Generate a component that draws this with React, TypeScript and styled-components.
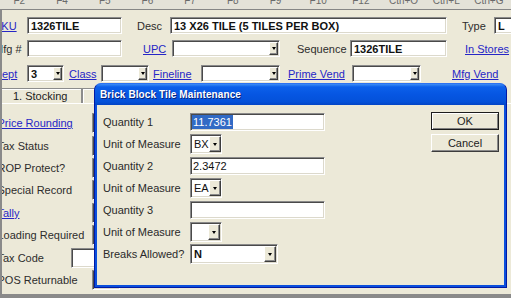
import styled, { createGlobalStyle, css } from "styled-components";

const GlobalStyle = createGlobalStyle`
  html, body {
    margin: 0;
    padding: 0;
    background: #ece9d8;
  }
  body {
    width: 511px;
    height: 298px;
    overflow: hidden;
  }
`;

const sunken = css`
  box-sizing: border-box;
  background: #fff;
  border-top: 1px solid #8a8a8a;
  border-left: 1px solid #8a8a8a;
  border-right: 1px solid #fff;
  border-bottom: 1px solid #fff;
  box-shadow: inset 1px 1px 0 #4a4a4a, inset -1px -1px 0 #dcd9cc;
`;

const raised = css`
  box-sizing: border-box;
  background: #ece9d8;
  border-top: 1px solid #fff;
  border-left: 1px solid #fff;
  border-right: 1px solid #3c3c3c;
  border-bottom: 1px solid #3c3c3c;
  box-shadow: inset -1px -1px 0 #8a8a8a;
`;

const Screen = styled.div`
  position: relative;
  width: 511px;
  height: 298px;
  overflow: hidden;
  background: #ece9d8;
  font-family: "Liberation Sans", Arial, sans-serif;
  font-size: 11px;
  color: #1e1e1e;
`;

const KeyBar = styled.div`
  display: flex;
  height: 9px;
  overflow: hidden;
  margin-left: -2px;
  background: #e4e2d8;
`;

const Key = styled.div`
  flex: none;
  width: 42.7px;
  margin-top: -5px;
  line-height: 12px;
  font-size: 10px;
  text-align: center;
  color: #6a6a6a;
`;

const Window = styled.div`
  box-sizing: border-box;
  height: 289px;
  overflow: hidden;
  border-top: 1px solid #868686;
  border-left: 2px solid #8a8a8a;
  border-bottom: 4px solid #8a8a8a;
`;

const Content = styled.div`
  margin-left: -8px;
`;

const Row = styled.div<{ $top: number }>`
  display: flex;
  align-items: center;
  height: 17px;
  margin-top: ${(p) => p.$top}px;
  white-space: nowrap;
`;

const Label = styled.span<{ $w?: number; $ml?: number; $link?: boolean }>`
  flex: none;
  width: ${(p) => (p.$w ? `${p.$w}px` : "auto")};
  margin-left: ${(p) => p.$ml ?? 0}px;
  color: #2c2c2c;
  ${(p) =>
    p.$link &&
    css`
      color: #2626c6;
      text-decoration: underline;
    `}
`;

const Field = styled.div<{ $w: number }>`
  ${sunken};
  flex: none;
  width: ${(p) => p.$w}px;
  height: 100%;
  padding-left: 3px;
  display: flex;
  align-items: center;
  font-weight: bold;
  color: #111;
  overflow: hidden;
`;

const Combo = styled.div<{ $w: number; $h?: number }>`
  ${sunken};
  flex: none;
  display: flex;
  width: ${(p) => p.$w}px;
  height: ${(p) => (p.$h ? `${p.$h}px` : "100%")};
  padding: 1px;
`;

const ComboText = styled.span<{ $bold?: boolean }>`
  flex: 1;
  display: flex;
  align-items: center;
  padding-left: 2px;
  font-weight: ${(p) => (p.$bold ? "bold" : "normal")};
  color: #111;
`;

const Drop = styled.span<{ $w: number }>`
  ${raised};
  flex: none;
  width: ${(p) => p.$w}px;
  display: flex;
  align-items: center;
  justify-content: center;

  &::after {
    content: "";
    border-left: 2.5px solid transparent;
    border-right: 2.5px solid transparent;
    border-top: 3px solid #000;
  }
`;

const TabStrip = styled.div`
  display: flex;
  height: 15px;
  margin-top: 6px;
  margin-left: 6px;
  border-bottom: 1px solid #fff;
`;

const Tab = styled.div<{ $w: number }>`
  box-sizing: border-box;
  width: ${(p) => p.$w}px;
  border: 1px solid #8c8c8c;
  border-bottom: none;
  box-shadow: inset 1px 1px 0 #fff;
  padding-left: 12px;
  line-height: 14px;
  color: #222;
`;

const Panel = styled.div`
  margin-top: 8px;
`;

const PanelRow = styled.div`
  display: flex;
  align-items: center;
  height: 22.4px;
  padding-left: 3.5px;
  white-space: nowrap;
`;

const PanelField = styled.div<{ $w: number }>`
  ${sunken};
  flex: none;
  width: ${(p) => p.$w}px;
  height: 20px;
`;

const Dialog = styled.div`
  position: absolute;
  left: 94px;
  top: 83px;
  width: 413px;
  height: 205px;
  box-sizing: border-box;
  display: flex;
  flex-direction: column;
  border: 1px solid #0019a5;
  border-top-color: #2c72f2;
  border-radius: 7px 7px 0 0;
  padding: 0 2px 2px;
  background: #0b4fdc;
`;

const TitleBar = styled.div`
  flex: none;
  height: 21px;
  margin: 0 -2px;
  padding-left: 5px;
  display: flex;
  align-items: center;
  border-radius: 6px 6px 0 0;
  background: linear-gradient(
    to bottom,
    #3d8df6 0%,
    #0c60ea 14%,
    #0656e2 50%,
    #0451d9 85%,
    #0344c4 100%
  );
  color: #fff;
  font-weight: bold;
  font-size: 10px;
  letter-spacing: 0.1px;
  text-shadow: 1px 1px 0 #0a2478;
`;

const Body = styled.div`
  flex: 1;
  display: flex;
  padding: 6px 5px 0 6px;
  background: #ece9d8;
`;

const FormGrid = styled.div`
  display: grid;
  grid-template-columns: 87px auto;
  grid-auto-rows: 22px;
  align-items: center;
  justify-items: start;
  white-space: nowrap;
`;

const DlgLabel = styled.span`
  color: #2a2a2a;
`;

const DlgInput = styled.div<{ $w: number }>`
  ${sunken};
  width: ${(p) => p.$w}px;
  height: 18px;
  padding-left: 2px;
  display: flex;
  align-items: center;
  color: #111;
`;

const Selected = styled.span`
  background: #316ac5;
  color: #fff;
  line-height: 14px;
  padding: 0 1px;
  margin-left: -1px;
`;

const ButtonColumn = styled.div`
  margin-left: auto;
  padding-top: 1px;
  display: flex;
  flex-direction: column;
  gap: 4px;
`;

const Button = styled.div<{ $default?: boolean }>`
  ${raised};
  width: 68px;
  height: 18px;
  display: flex;
  align-items: center;
  justify-content: center;
  color: #222;
  ${(p) =>
    p.$default &&
    css`
      border: 1px solid #1c1c1c;
      box-shadow: inset 1px 1px 0 #fff, inset -1px -1px 0 #808080;
    `}
`;

const keys = ["F2", "F4", "F5", "F6", "F7", "F8", "F9", "F10", "F12", "Ctrl+O", "Ctrl+L", "Ctrl+G"];

const panelRows: { label: string; link?: boolean; w: number; field: number }[] = [
  { label: "Price Rounding", link: true, w: 94.5, field: 60 },
  { label: "Tax Status", w: 94.5, field: 60 },
  { label: "ROP Protect?", w: 94.5, field: 60 },
  { label: "Special Record", w: 94.5, field: 60 },
  { label: "Tally", link: true, w: 94.5, field: 60 },
  { label: "Loading Required", w: 94.5, field: 60 },
  { label: "Tax Code", w: 73.5, field: 60 },
];

const App = () => {
  return (
    <Screen>
      <GlobalStyle />
      <KeyBar>
        {keys.map((k) => (
          <Key key={k}>{k}</Key>
        ))}
      </KeyBar>
      <Window>
        <Content>
          <Row $top={7}>
            <Label $w={33} $link>
              SKU
            </Label>
            <Field $w={95}>1326TILE</Field>
            <Label $w={33} $ml={15}>
              Desc
            </Label>
            <Field $w={277}>13 X26 TILE (5 TILES PER BOX)</Field>
            <Label $w={32} $ml={15}>
              Type
            </Label>
            <Field $w={30}>L</Field>
          </Row>
          <Row $top={6}>
            <Label $w={33}>Mfg #</Label>
            <Field $w={95} />
            <Label $w={29} $ml={21} $link>
              UPC
            </Label>
            <Combo $w={108}>
              <ComboText />
              <Drop $w={9} />
            </Combo>
            <Label $w={53} $ml={17}>
              Sequence
            </Label>
            <Field $w={97}>1326TILE</Field>
            <Label $ml={18} $link>
              In Stores
            </Label>
          </Row>
          <Row $top={8}>
            <Label $w={33} $link>
              Dept
            </Label>
            <Combo $w={37}>
              <ComboText $bold>3</ComboText>
              <Drop $w={9} />
            </Combo>
            <Label $w={32} $ml={5} $link>
              Class
            </Label>
            <Combo $w={48}>
              <ComboText />
              <Drop $w={9} />
            </Combo>
            <Label $w={48} $ml={4} $link>
              Fineline
            </Label>
            <Combo $w={79}>
              <ComboText />
              <Drop $w={9} />
            </Combo>
            <Label $w={64} $ml={8} $link>
              Prime Vend
            </Label>
            <Combo $w={69}>
              <ComboText />
              <Drop $w={9} />
            </Combo>
            <Label $ml={31} $link>
              Mfg Vend
            </Label>
          </Row>
          <TabStrip>
            <Tab $w={82}>1. Stocking</Tab>
            <Tab $w={40} />
          </TabStrip>
          <Panel>
            {panelRows.map((r) => (
              <PanelRow key={r.label}>
                <Label $w={r.w} $link={r.link}>
                  {r.label}
                </Label>
                <PanelField $w={r.field} />
              </PanelRow>
            ))}
            <PanelRow>
              <Label $w={94.5}>POS Returnable</Label>
              <Combo $w={28} $h={20}>
                <ComboText />
                <Drop $w={12} />
              </Combo>
            </PanelRow>
          </Panel>
        </Content>
      </Window>

      <Dialog>
        <TitleBar>Brick Block Tile Maintenance</TitleBar>
        <Body>
          <FormGrid>
            <DlgLabel>Quantity 1</DlgLabel>
            <DlgInput $w={135}>
              <Selected>11.7361</Selected>
            </DlgInput>
            <DlgLabel>Unit of Measure</DlgLabel>
            <Combo $w={32} $h={20}>
              <ComboText>BX</ComboText>
              <Drop $w={12} />
            </Combo>
            <DlgLabel>Quantity 2</DlgLabel>
            <DlgInput $w={135}>2.3472</DlgInput>
            <DlgLabel>Unit of Measure</DlgLabel>
            <Combo $w={32} $h={20}>
              <ComboText>EA</ComboText>
              <Drop $w={12} />
            </Combo>
            <DlgLabel>Quantity 3</DlgLabel>
            <DlgInput $w={135} />
            <DlgLabel>Unit of Measure</DlgLabel>
            <Combo $w={32} $h={20}>
              <ComboText />
              <Drop $w={12} />
            </Combo>
            <DlgLabel>Breaks Allowed?</DlgLabel>
            <Combo $w={88} $h={20}>
              <ComboText $bold>N</ComboText>
              <Drop $w={12} />
            </Combo>
          </FormGrid>
          <ButtonColumn>
            <Button $default>OK</Button>
            <Button>Cancel</Button>
          </ButtonColumn>
        </Body>
      </Dialog>
    </Screen>
  );
};

export default App;
